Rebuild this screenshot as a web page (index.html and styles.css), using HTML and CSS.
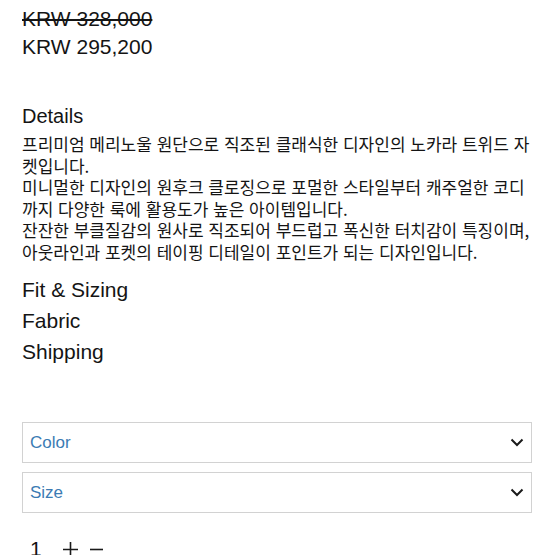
FILE: index.html
```html
<!DOCTYPE html>
<html lang="ko">
    <head>
        <meta charset="utf-8">
        <meta name="viewport" content="width=device-width, initial-scale=1.0">
        <title>Product</title>
        <link rel="stylesheet" href="styles.css">
    </head>
    <body>
        <main class="product">
            <section class="prices">
                <p class="price old">KRW 328,000</p>
                <p class="price">KRW 295,200</p>
            </section>
            <section class="details">
                <h2>Details</h2>
                <p class="desc">프리미엄 메리노울 원단으로 직조된 클래식한 디자인의 노카라 트위드 자켓입니다.<br>미니멀한 디자인의 원후크 클로징으로 포멀한 스타일부터 캐주얼한 코디까지 다양한 룩에 활용도가 높은 아이템입니다.<br>잔잔한 부클질감의 원사로 직조되어 부드럽고 폭신한 터치감이 특징이며, 아웃라인과 포켓의 테이핑 디테일이 포인트가 되는 디자인입니다.</p>
            </section>
            <ul class="tabs">
                <li>Fit &amp; Sizing</li>
                <li>Fabric</li>
                <li>Shipping</li>
            </ul>
            <section class="options">
                <div class="select">
                    <span>Color</span>
                    <svg width="14" height="9" viewBox="0 0 14 9"><path d="M1.5 1.5 L7 7 L12.5 1.5" fill="none" stroke="#1a1a1a" stroke-width="2"/></svg>
                </div>
                <div class="select">
                    <span>Size</span>
                    <svg width="14" height="9" viewBox="0 0 14 9"><path d="M1.5 1.5 L7 7 L12.5 1.5" fill="none" stroke="#1a1a1a" stroke-width="2"/></svg>
                </div>
            </section>
            <div class="qty">
                <span class="num">1</span>
                <svg class="plus" width="15" height="15" viewBox="0 0 15 15"><path d="M7.5 0 V15 M0 7.5 H15" stroke="#1a1a1a" stroke-width="1.6"/></svg>
                <svg class="minus" width="13" height="15" viewBox="0 0 13 15"><path d="M0 7.5 H13" stroke="#1a1a1a" stroke-width="1.6"/></svg>
            </div>
        </main>
    </body>
</html>
```

FILE: styles.css
```css
html, body, h2, p, ul, li {
    margin: 0;
    padding: 0;
}
body {
    font-family: "Liberation Sans", Arial, sans-serif;
    color: #141414;
    background: #fff;
}
ul {
    list-style: none;
}
.product {
    width: 512px;
    padding: 5px 0 0 22px;
}
.price {
    font-size: 21px;
    line-height: 28px;
}
.old {
    text-decoration: line-through;
}
.details {
    margin-top: 43px;
}
.details h2 {
    font-size: 20px;
    line-height: 24px;
    font-weight: normal;
}
.desc {
    margin-top: 5px;
    font-family: "Noto Sans CJK KR", sans-serif;
    font-size: 17px;
    line-height: 21.5px;
}
.tabs {
    margin-top: 12px;
    font-size: 21px;
    line-height: 31px;
}
.options {
    margin-top: 55px;
    width: 510px;
    display: flex;
    flex-direction: column;
    gap: 9px;
}
.select {
    box-sizing: border-box;
    height: 41px;
    border: 1px solid #d2d2d2;
    padding: 0 7px 0 7px;
    display: flex;
    align-items: center;
    justify-content: space-between;
    font-size: 17px;
    color: #3b7bb3;
}
.qty {
    margin-top: 22px;
    height: 28px;
    display: flex;
    align-items: center;
    padding-left: 8px;
    font-size: 21px;
}
.qty .num {
    width: 12px;
}
.qty .plus {
    margin-left: 21px;
}
.qty .minus {
    margin-left: 12px;
}
```
